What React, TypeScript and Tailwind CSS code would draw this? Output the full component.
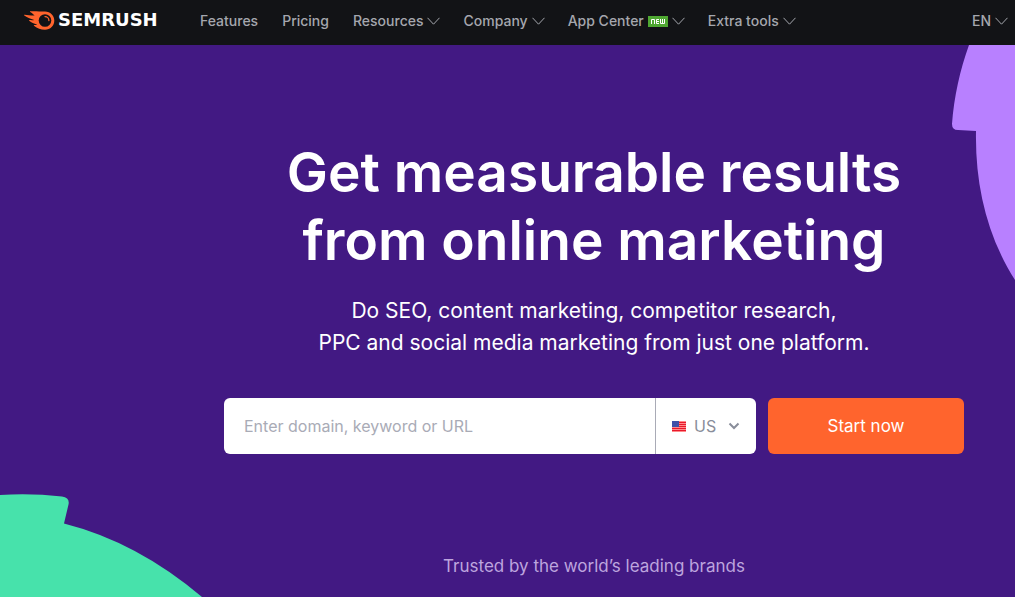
import { useState } from "react";
import type { FormEvent } from "react";

type NavItem = {
  label: string;
  menu?: boolean;
  isNew?: boolean;
};

const navItems: NavItem[] = [
  { label: "Features" },
  { label: "Pricing" },
  { label: "Resources", menu: true },
  { label: "Company", menu: true },
  { label: "App Center", menu: true, isNew: true },
  { label: "Extra tools", menu: true },
];

function MenuArrow() {
  return (
    <svg viewBox="0 0 13 8" className="h-2 w-[13px] shrink-0" fill="none" stroke="currentColor" aria-hidden="true">
      <path d="M.5.8 6.500 7.200 12.500.8" />
    </svg>
  );
}

function NewBadge() {
  return (
    <svg viewBox="0 0 20 11" className="h-[11px] w-5 shrink-0" role="img" aria-label="New">
      <path fill="#4fa832" d="M0 0h20v11H0z" />
      <g fill="none" stroke="#fff">
        <path d="M3.5 8V3.5h3V8" />
        <path d="M11 3.5H8.5v4H11M8.5 5.5H11" />
        <path d="M12.500 3v4.500h4V3M14.500 3v4.500" />
      </g>
    </svg>
  );
}

function Logo() {
  return (
    <a href="#" className="flex items-center gap-[3px] text-white" aria-label="Semrush home">
      <svg viewBox="0 0 31 19" className="h-[19px] w-[31px] shrink-0" aria-hidden="true">
        <path
          fill="#ff642d"
          d="M6.500.300C10 .200 16 .600 21 .400c5.300 0 9.300 4 9.300 9.100 0 5.200-4 9.200-9.300 9.200-4.200 0-8-1.400-10.700-3.800-.9-.8-.5-1.100.4-1 1 .1 2.200 0 2.600-.4-2.300-.7-5.600-1.900-7.800-3.600-.7-.6-.5-1 .3-.9 1.500.2 3.300.2 4.400-.1C6.500 8 2.600 6.200.300 4.500c-.5-.4-.3-.7.3-.7 3.500.6 7.200.8 10 .7C9.600 3.300 8 2 6.200.9c-.4-.3-.3-.6.300-.6z"
        />
        <circle cx="21" cy="9.500" r="6.300" fill="#121316" />
        <path d="M21 5.600a3.900 3.900 0 0 1 3.900 3.900" fill="none" stroke="#ff642d" strokeWidth="1.300" strokeLinecap="round" />
      </svg>
      <span className="font-['DejaVu_Sans',sans-serif] text-lg leading-5 font-bold">SEMRUSH</span>
    </a>
  );
}

function Header() {
  return (
    <header className="flex h-[45px] items-start bg-[#121316] pt-2.5 pr-[7px] pl-6 text-sm leading-5 font-medium text-[#a5a7ae]">
      <div className="w-44 shrink-0">
        <Logo />
      </div>
      <nav className="flex flex-1 gap-[23px] pt-px" aria-label="Main">
        {navItems.map((item) =>
          item.menu ? (
            <button key={item.label} type="button" className="flex items-center gap-1 whitespace-nowrap">
              {item.label}
              {item.isNew && <NewBadge />}
              <MenuArrow />
            </button>
          ) : (
            <a key={item.label} href="#" className="pr-px whitespace-nowrap">
              {item.label}
            </a>
          )
        )}
      </nav>
      <button type="button" className="flex items-center gap-1 pt-px">
        EN
        <MenuArrow />
      </button>
    </header>
  );
}

function UsFlag() {
  return (
    <svg viewBox="0 0 14 11" className="h-[11px] w-3.5 shrink-0" aria-hidden="true">
      <path fill="#ff8a8a" d="M0 0h14v11H0z" />
      <path stroke="#e8192c" strokeWidth="1" d="M0 1.500h14M0 3.500h14M0 5.500h14M0 7.500h14M0 9.500h14" />
      <path fill="#3f51a8" d="M0 0h7v6H0z" />
    </svg>
  );
}

function SearchForm() {
  const [query, setQuery] = useState("");
  const [country, setCountry] = useState("US");

  const submit = (event: FormEvent) => event.preventDefault();

  return (
    <form onSubmit={submit} className="flex w-full gap-3">
      <div className="flex h-14 min-w-0 flex-1 rounded-md bg-white">
        <input
          type="text"
          aria-label="Domain, keyword or URL"
          placeholder="Enter domain, keyword or URL"
          value={query}
          onChange={(event) => setQuery(event.target.value)}
          className="min-w-0 flex-1 rounded-l-md px-5 text-base text-[#50525c] outline-none placeholder:text-[#a9abb6]"
        />
        <label className="flex w-[101px] items-center border-l border-[#a9abb6] px-4 text-[#898d9a]">
          <UsFlag />
          <select
            aria-label="Country"
            value={country}
            onChange={(event) => setCountry(event.target.value)}
            className="ml-2 flex-1 appearance-none bg-transparent text-base outline-none"
          >
            <option>US</option>
            <option>UK</option>
            <option>CA</option>
          </select>
          <svg viewBox="0 0 12 8" className="h-2 w-3 shrink-0" fill="none" stroke="currentColor" strokeWidth="2" aria-hidden="true">
            <path d="M1.500 1.500 6 6l4.500-4.500" />
          </svg>
        </label>
      </div>
      <button type="submit" className="h-14 w-49 rounded-md bg-[#ff642d] pt-0.5 text-[17px] text-white">
        Start now
      </button>
    </form>
  );
}

export default function App() {
  return (
    <div className="flex min-h-screen flex-col bg-[#421983] font-['Inter',sans-serif]">
      <Header />
      <main className="relative flex-1 overflow-hidden pt-[93px] pr-[51px] pb-4 pl-56">
        <svg viewBox="0 0 64 236" className="absolute top-0 right-0 h-[236px] w-16" aria-hidden="true">
          <path fill="#b880ff" d="M18 0C9 25 3 52 1 79q0 6 6 6l18 1C24 140 36 191 64 235V0z" />
        </svg>
        <svg viewBox="0 0 202 104" className="absolute bottom-0 left-0 h-[104px] w-[202px]" aria-hidden="true">
          <path fill="#47e2ab" d="M0 2Q31 0 62 3.500q8 1 6.500 8L64 30.500Q137 49 202 104H0z" />
        </svg>
        <div className="relative flex flex-col items-center text-center text-white">
          <h1 className="text-[55px] leading-[68px] font-semibold whitespace-nowrap">
            Get measurable results
            <br />
            from online marketing
          </h1>
          <p className="mt-[21px] text-[21px] leading-8">
            Do SEO, content marketing, competitor research,
            <br />
            PPC and social media marketing from just one platform.
          </p>
          <div className="mt-[39px] w-full">
            <SearchForm />
          </div>
          <p className="mt-[100px] text-[17px] leading-6 text-[#bda5de]">Trusted by the world’s leading brands</p>
        </div>
      </main>
    </div>
  );
}
